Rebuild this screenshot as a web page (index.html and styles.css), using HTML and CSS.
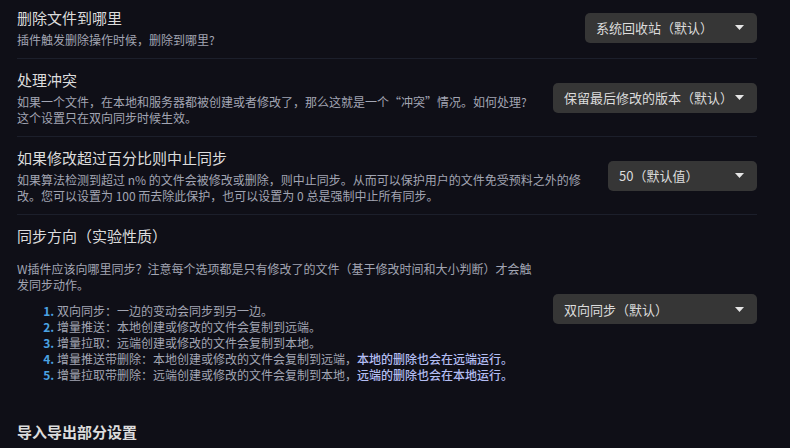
FILE: index.html
```html
<!DOCTYPE html>
<html lang="zh-CN">
<head>
    <meta charset="UTF-8">
    <meta name="viewport" content="width=device-width, initial-scale=1.0">
    <title>同步设置</title>
    <link rel="stylesheet" href="styles.css">
</head>
<body>
    <div class="settings">
        <div class="setting-item">
            <div class="setting-item-info">
                <div class="setting-item-name">删除文件到哪里</div>
                <div class="setting-item-description">插件触发删除操作时候，删除到哪里?</div>
            </div>
            <div class="setting-item-control">
                <div class="dropdown dropdown-trash">
                    <span>系统回收站（默认）</span>
                    <svg class="dropdown-arrow" width="9" height="5" viewBox="0 0 9 5"><path d="M0 0H9L4.5 5Z" fill="#e6e6e6"/></svg>
                </div>
            </div>
        </div>

        <div class="setting-item">
            <div class="setting-item-info">
                <div class="setting-item-name">处理冲突</div>
                <div class="setting-item-description">如果一个文件，在本地和服务器都被创建或者修改了，那么这就是一个“冲突”情况。如何处理?<br>这个设置只在双向同步时候生效。</div>
            </div>
            <div class="setting-item-control">
                <div class="dropdown dropdown-conflict">
                    <span>保留最后修改的版本（默认）</span>
                    <svg class="dropdown-arrow" width="9" height="5" viewBox="0 0 9 5"><path d="M0 0H9L4.5 5Z" fill="#e6e6e6"/></svg>
                </div>
            </div>
        </div>

        <div class="setting-item">
            <div class="setting-item-info">
                <div class="setting-item-name">如果修改超过百分比则中止同步</div>
                <div class="setting-item-description">如果算法检测到超过 n% 的文件会被修改或删除，则中止同步。从而可以保护用户的文件免受预料之外的修改。您可以设置为 100 而去除此保护，也可以设置为 0 总是强制中止所有同步。</div>
            </div>
            <div class="setting-item-control">
                <div class="dropdown dropdown-abort">
                    <span>50（默认值）</span>
                    <svg class="dropdown-arrow" width="9" height="5" viewBox="0 0 9 5"><path d="M0 0H9L4.5 5Z" fill="#e6e6e6"/></svg>
                </div>
            </div>
        </div>

        <div class="setting-item">
            <div class="setting-item-info">
                <div class="setting-item-name">同步方向（实验性质）</div>
                <div class="setting-item-description">
                    <p>W插件应该向哪里同步？注意每个选项都是只有修改了的文件（基于修改时间和大小判断）才会触发同步动作。</p>
                    <ol>
                        <li>双向同步：一边的变动会同步到另一边。</li>
                        <li>增量推送：本地创建或修改的文件会复制到远端。</li>
                        <li>增量拉取：远端创建或修改的文件会复制到本地。</li>
                        <li>增量推送带删除：本地创建或修改的文件会复制到远端，<strong>本地的删除也会在远端运行。</strong></li>
                        <li>增量拉取带删除：远端创建或修改的文件会复制到本地，<strong>远端的删除也会在本地运行。</strong></li>
                    </ol>
                </div>
            </div>
            <div class="setting-item-control">
                <div class="dropdown dropdown-direction">
                    <span>双向同步（默认）</span>
                    <svg class="dropdown-arrow" width="9" height="5" viewBox="0 0 9 5"><path d="M0 0H9L4.5 5Z" fill="#e6e6e6"/></svg>
                </div>
            </div>
        </div>

        <div class="setting-item-heading">导入导出部分设置</div>
    </div>
</body>
</html>
```

FILE: styles.css
```css
body {
    margin: 0;
    background-color: #0f0f17;
    color: #dcdcdc;
    font-family: "Noto Sans CJK SC", "Noto Sans", sans-serif;
    overflow: hidden;
}
.settings {
    padding: 0 33px 0 17px;
}
.setting-item {
    display: flex;
    align-items: center;
    padding: 10.5px 0;
    border-top: 1px solid #1c1f2b;
}
.setting-item:first-child {
    border-top: none;
    padding-top: 7.5px;
}
.setting-item-info {
    flex: 1 1 auto;
    margin-right: 20px;
}
.setting-item-name {
    font-size: 15px;
    line-height: 20px;
    color: #dcdcdc;
}
.setting-item-description {
    font-size: 12px;
    line-height: 16px;
    padding-top: 4px;
    color: #a2a5b3;
}
.setting-item-description p {
    margin: 11px 0 10px;
}
.setting-item-description ol {
    margin: 10px 0;
    padding-left: 40px;
}
.setting-item-description li::marker {
    color: #4ba3e3;
    font-weight: 600;
}
.setting-item-description strong {
    color: #b3bdf2;
    font-weight: 500;
}
.setting-item-control {
    flex: 0 0 auto;
}
.dropdown {
    display: flex;
    align-items: center;
    justify-content: space-between;
    height: 30px;
    box-sizing: border-box;
    padding: 0 13px 0 11px;
    background-color: #363636;
    border-radius: 5px;
    font-size: 13px;
    color: #dcdcdc;
}
.dropdown-trash {
    width: 172px;
}
.dropdown-conflict {
    width: 204px;
}
.dropdown-abort {
    width: 149px;
}
.dropdown-direction {
    width: 204px;
}
.dropdown-arrow {
    display: block;
}
.setting-item-heading {
    margin-top: 19px;
    font-size: 15px;
    line-height: 20px;
    font-weight: 700;
    color: #dcdcdc;
}
```
